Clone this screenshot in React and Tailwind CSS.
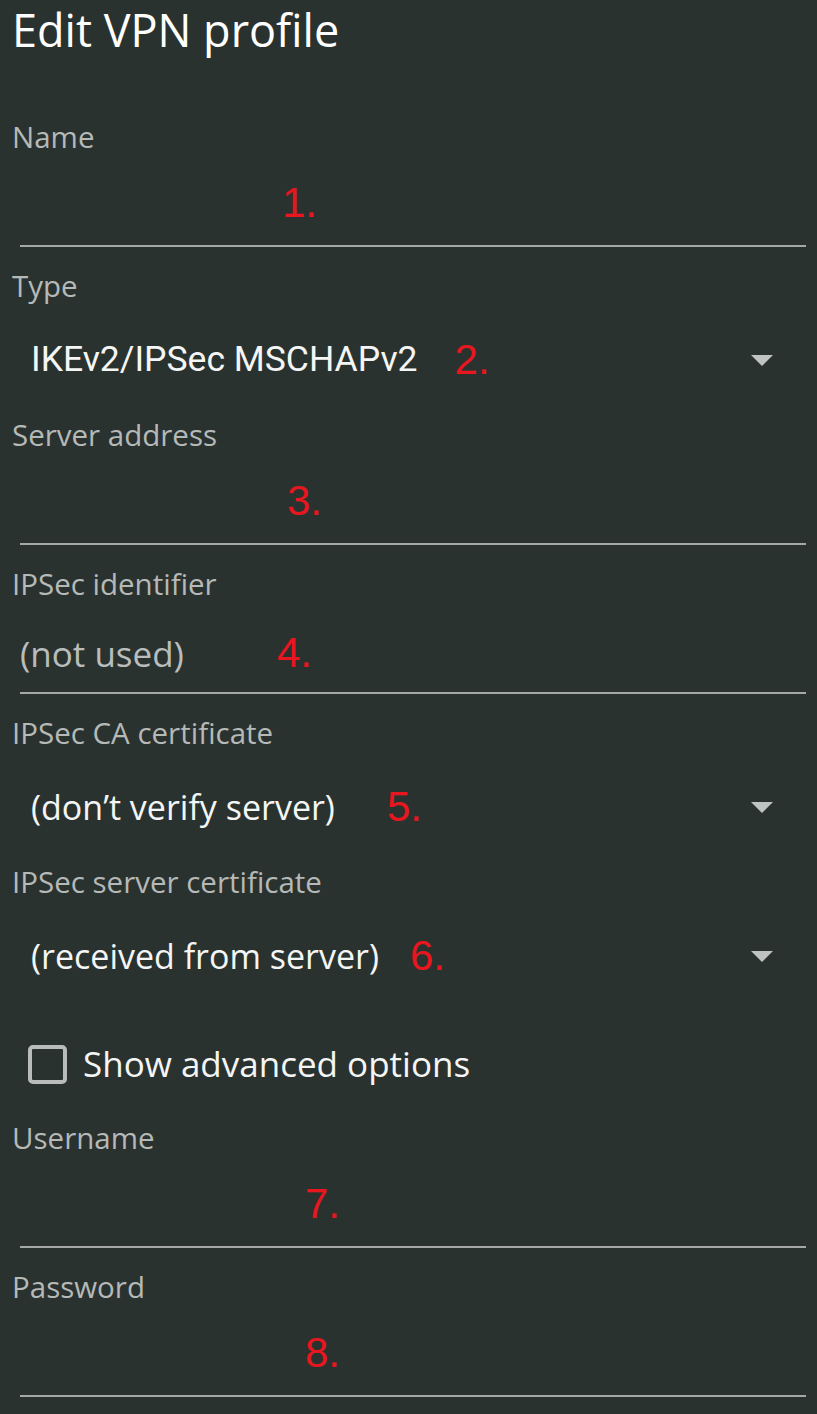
import { useState } from "react";

const SANS = { fontFamily: '"Open Sans", "Noto Sans", sans-serif' };
const ROBOTO = { fontFamily: 'Roboto, "Noto Sans", sans-serif' };
const MARK = { fontFamily: '"Liberation Sans", Arial, sans-serif' };

function Caret() {
  return (
    <svg width="22" height="11" viewBox="0 0 22 11" className="shrink-0">
      <path d="M0 0 L22 0 L11 11 Z" fill="#bfc3c1" />
    </svg>
  );
}

function Mark({ n, className }) {
  return (
    <span className={`text-[42px] leading-none text-[#e8161e] ${className}`} style={MARK}>
      {n}.
    </span>
  );
}

function TextField({ label, value, n, markClass }) {
  return (
    <div className="h-[149px] flex flex-col">
      <div className="h-[40px] leading-[40px] pl-[12px] text-[29.5px] text-[#b5b9b7]" style={SANS}>
        {label}
      </div>
      <div className={`h-[88px] flex items-center pl-[20px] ${value ? "pt-[10px]" : "pt-[4px]"}`}>
        {value && (
          <span className="text-[35px] leading-none text-[#b9bdbb]" style={SANS}>
            {value}
          </span>
        )}
        <Mark n={n} className={markClass} />
      </div>
      <div className="h-[2px] ml-[20px] w-[786px] bg-[#a4a8a6]" />
    </div>
  );
}

function Spinner({ label, value, n, markClass, font, size }) {
  return (
    <div className="h-[149px] flex flex-col">
      <div className="h-[40px] leading-[40px] pl-[12px] text-[29.5px] text-[#b5b9b7]" style={SANS}>
        {label}
      </div>
      <div className="h-[100px] flex items-center pl-[31px] pr-[44px] pt-[8px]">
        <span className={`${size} leading-none text-[#f4f6f5]`} style={font}>
          {value}
        </span>
        <Mark n={n} className={markClass} />
        <div className="flex-1" />
        <Caret />
      </div>
    </div>
  );
}

export default function App() {
  const [advanced, setAdvanced] = useState(false);

  return (
    <div className="min-h-screen w-full bg-[#2a3230] overflow-hidden">
      <div className="h-[117px]">
        <h1 className="pl-[12px] text-[45px] leading-[60px] text-white" style={SANS}>
          Edit VPN profile
        </h1>
      </div>

      <TextField label="Name" n={1} markClass="ml-[262px]" />
      <Spinner
        label="Type"
        value="IKEv2/IPSec MSCHAPv2"
        n={2}
        markClass="ml-[37px]"
        font={ROBOTO}
        size="text-[35.5px]"
      />
      <TextField label="Server address" n={3} markClass="ml-[267px]" />
      <TextField label="IPSec identifier" value="(not used)" n={4} markClass="ml-[93px]" />
      <Spinner
        label="IPSec CA certificate"
        value="(don’t verify server)"
        n={5}
        markClass="ml-[52px]"
        font={SANS}
        size="text-[34px]"
      />
      <Spinner
        label="IPSec server certificate"
        value="(received from server)"
        n={6}
        markClass="ml-[31px]"
        font={SANS}
        size="text-[34px]"
      />

      <div className="h-[107px] flex items-center pl-[28px]">
        <button
          onClick={() => setAdvanced(!advanced)}
          className="w-[39px] h-[39px] rounded-[5px] border-[4px] border-[#b8bcba] bg-transparent"
        />
        <span className="ml-[16px] text-[35px] text-[#f4f6f5]" style={SANS}>
          Show advanced options
        </span>
      </div>

      <TextField label="Username" n={7} markClass="ml-[285px]" />
      <TextField label="Password" n={8} markClass="ml-[285px]" />
    </div>
  );
}
